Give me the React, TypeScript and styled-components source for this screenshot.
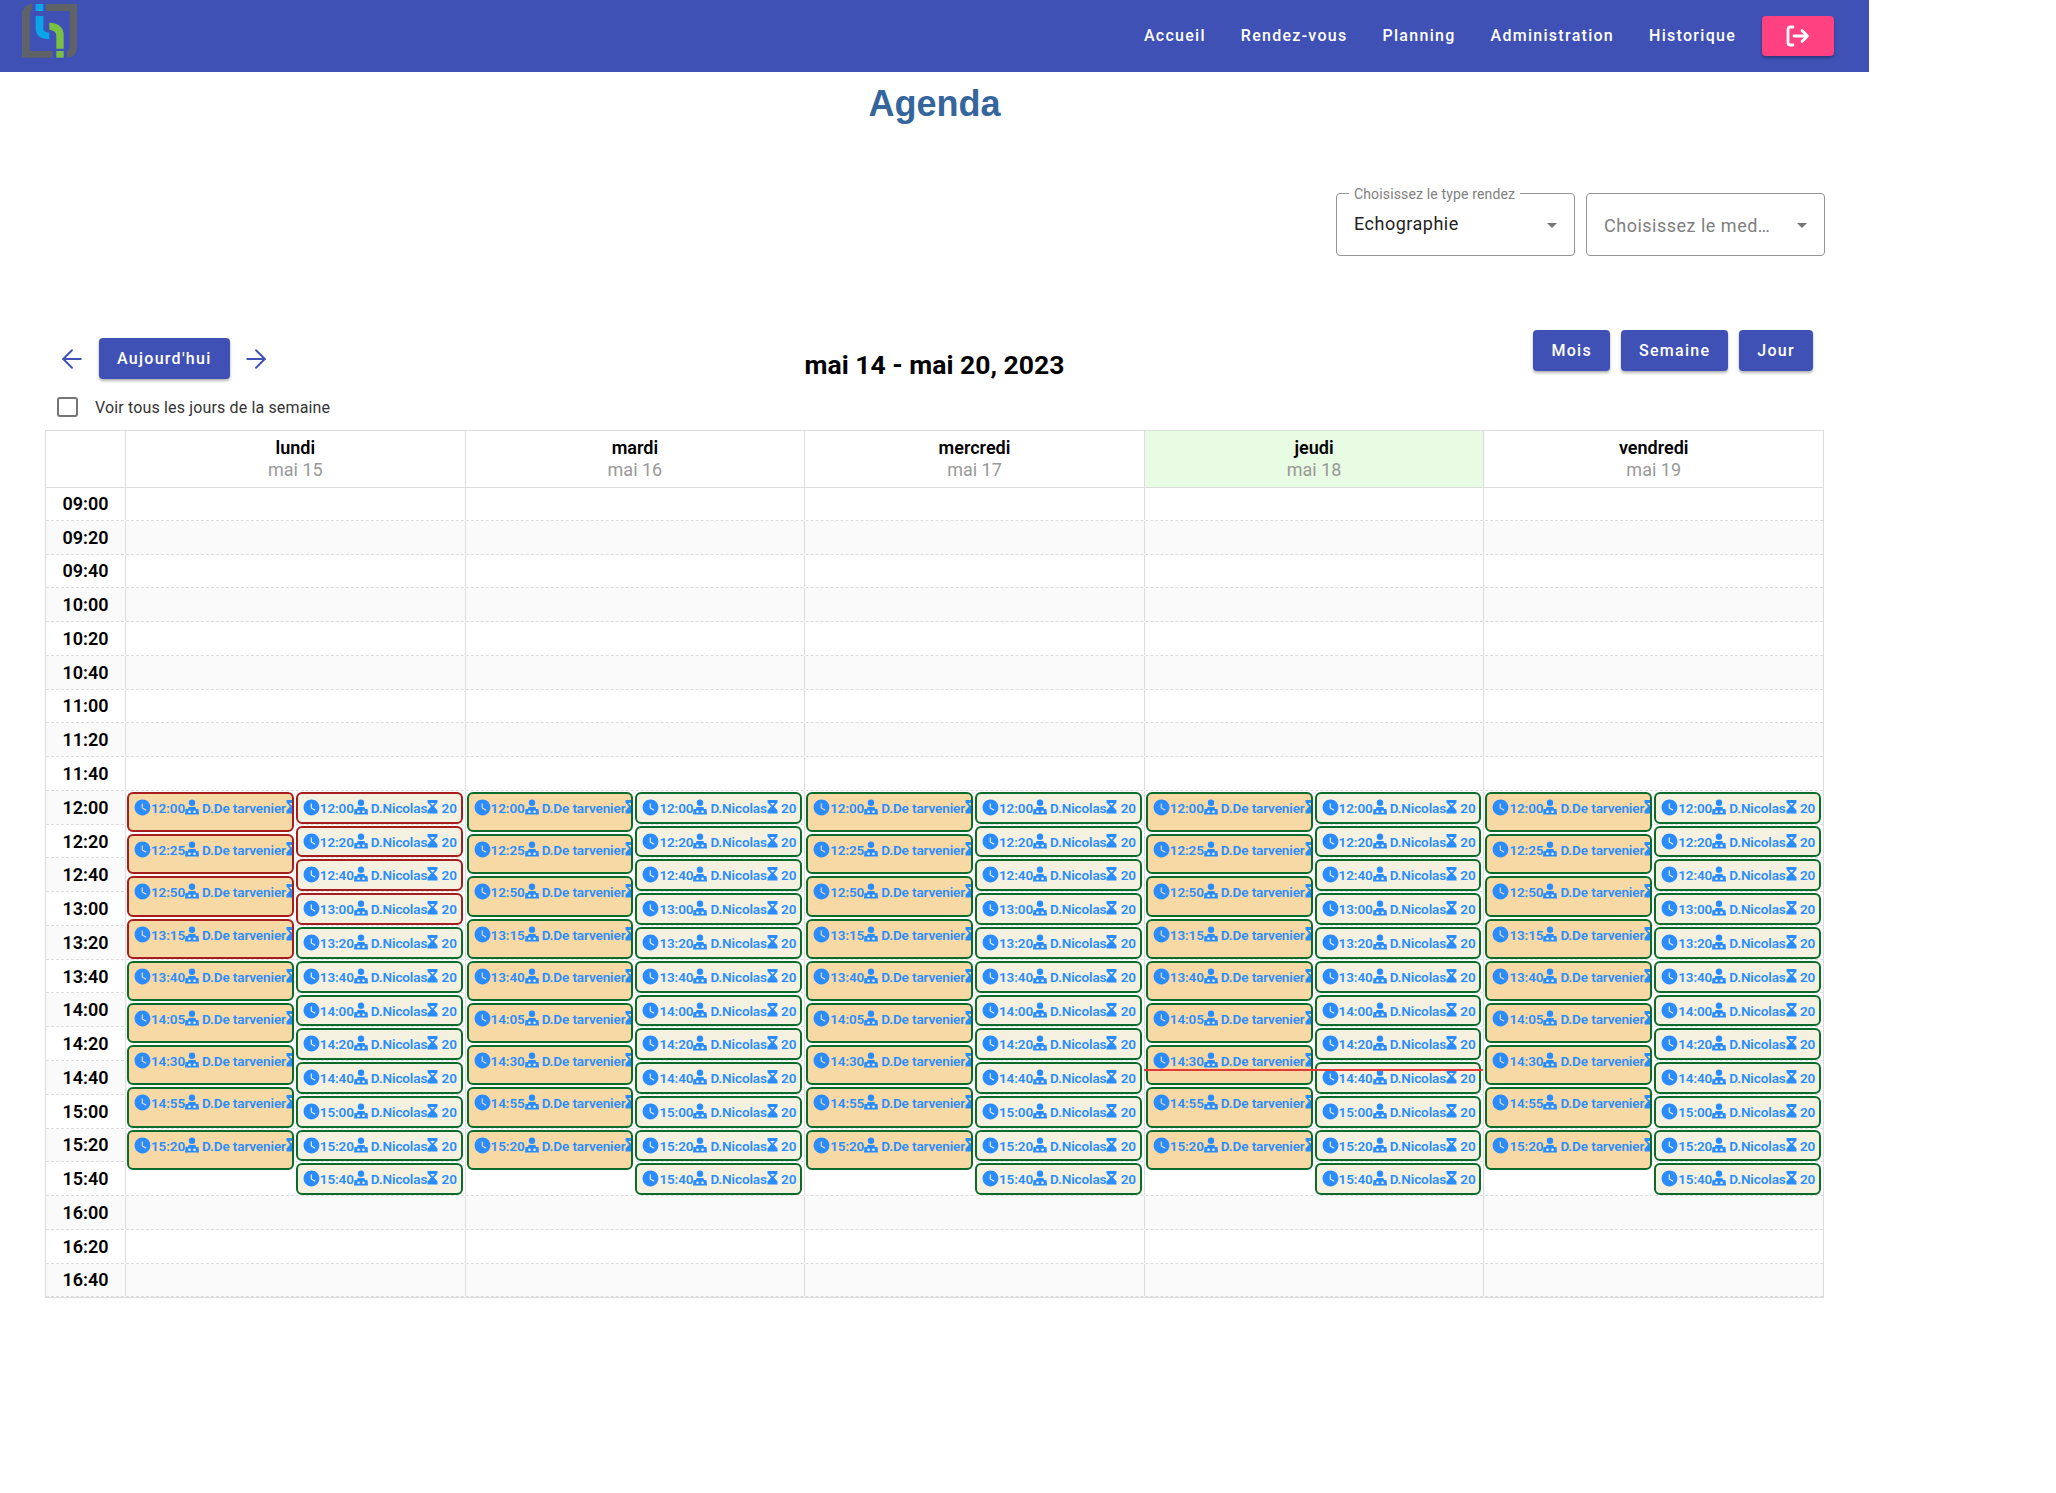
import { ArrowLeft, ArrowRight } from 'lucide-react';
import { MdWatchLater } from 'react-icons/md';
import styled, { createGlobalStyle } from 'styled-components';

const ROW_HEIGHT = 33.77;

const GlobalStyle = createGlobalStyle`
  html, body {
    margin: 0;
    padding: 0;
    background: #fff;
    font-family: Roboto, "Liberation Sans", sans-serif;
  }
`;

const Page = styled.div`
  width: 1869px;
  height: 1493px;
`;

const NavBar = styled.header`
  height: 72px;
  display: flex;
  align-items: center;
  justify-content: space-between;
  padding: 0 35px 0 22px;
  box-sizing: border-box;
  background: #3f51b5;
`;

const Logo = styled.svg`
  width: 55px;
  height: 54px;
  margin-top: -10px;
  display: block;
`;

const NavLinks = styled.nav`
  display: flex;
  align-items: center;
`;

const NavLink = styled.a`
  margin-right: 35px;
  margin-top: -2px;
  color: #fff;
  font-size: 16px;
  font-weight: 500;
  letter-spacing: 1.28px;
  white-space: nowrap;
`;

const LogoutButton = styled.button`
  width: 72px;
  height: 40px;
  margin-left: -9px;
  padding: 0;
  border: 0;
  border-radius: 4px;
  display: flex;
  align-items: center;
  justify-content: center;
  background: #ff4081;
  box-shadow: 0 2px 3px rgba(0, 0, 0, 0.3);
`;

const Title = styled.h1`
  margin: 0;
  padding-top: 10px;
  height: 121px;
  box-sizing: border-box;
  text-align: center;
  color: #34659c;
  font-family: "Liberation Sans", Arial, sans-serif;
  font-size: 36px;
  line-height: 44px;
  font-weight: 700;
`;

const Filters = styled.div`
  height: 137px;
  display: flex;
  justify-content: flex-end;
  gap: 11px;
  padding-right: 44px;
`;

const SelectBox = styled.div`
  position: relative;
  width: 239px;
  height: 63px;
  box-sizing: border-box;
  padding: 0 40px 0 17px;
  display: flex;
  align-items: center;
  border: 1px solid #949494;
  border-radius: 4px;
`;

const SelectLabel = styled.span`
  position: absolute;
  top: -7px;
  left: 12px;
  padding: 0 5px;
  background: #fff;
  color: #808080;
  font-size: 14px;
  line-height: 15px;
  letter-spacing: 0.15px;
  white-space: nowrap;
`;

const SelectValue = styled.span<{ $placeholder?: boolean }>`
  margin-top: ${(p) => (p.$placeholder ? '2px' : '-3px')};
  color: ${(p) => (p.$placeholder ? '#808080' : '#222')};
  font-size: 18px;
  letter-spacing: 0.5px;
  white-space: nowrap;
`;

const SelectArrow = styled.span`
  position: absolute;
  right: 17px;
  top: 29px;
  border-left: 5.5px solid transparent;
  border-right: 5.5px solid transparent;
  border-top: 5.5px solid #757575;
`;

const Toolbar = styled.div`
  display: grid;
  grid-template-columns: 1fr auto 1fr;
  padding: 0 56px;
  height: 62px;
`;

const ToolbarLeft = styled.div`
  display: flex;
  align-items: center;
  height: 41px;
  margin-top: 8px;
`;

const ArrowButton = styled.span<{ $before: number; $after: number }>`
  display: flex;
  margin: 0 ${(p) => p.$after}px 0 ${(p) => p.$before}px;
  color: #3f51b5;
`;

const ActionButton = styled.button`
  height: 41px;
  padding: 0 18px;
  border: 0;
  border-radius: 4px;
  background: #3f51b5;
  color: #fff;
  font-family: inherit;
  font-size: 16px;
  font-weight: 500;
  letter-spacing: 1.28px;
  box-shadow: 0 2px 3px rgba(0, 0, 0, 0.3);
`;

const RangeTitle = styled.h2`
  margin: 17px 0 0;
  font-size: 26.5px;
  line-height: 36px;
  font-weight: 700;
  color: #000;
  white-space: nowrap;
`;

const ViewButtons = styled.div`
  display: flex;
  justify-content: flex-end;
  gap: 11px;
`;

const CheckRow = styled.label`
  display: flex;
  align-items: center;
  gap: 17px;
  height: 30px;
  margin-bottom: 8px;
  padding-left: 57px;
  color: #333;
  font-size: 16px;
  letter-spacing: 0.15px;
`;

const CheckBox = styled.span`
  width: 21px;
  height: 20px;
  box-sizing: border-box;
  border: 2px solid #757575;
  border-radius: 3px;
`;

const Calendar = styled.section`
  width: 1779px;
  margin: 0 0 0 45px;
  box-sizing: border-box;
  border: 1px solid #ddd;
`;

const HeaderRow = styled.div`
  display: grid;
  grid-template-columns: 79px repeat(5, 1fr);
  height: 56px;
  border-bottom: 1px solid #ddd;
`;

const Corner = styled.div``;

const DayHead = styled.div<{ $today?: boolean }>`
  border-left: 1px solid #ddd;
  padding-bottom: 2px;
  box-sizing: border-box;
  display: flex;
  flex-direction: column;
  align-items: center;
  justify-content: center;
  background: ${(p) => (p.$today ? '#e8fbe3' : 'transparent')};
`;

const DayName = styled.span`
  color: #000;
  font-size: 18px;
  line-height: 23px;
  font-weight: 600;
`;

const DayDate = styled.span`
  color: #999;
  font-size: 18px;
  line-height: 22px;
`;

const Body = styled.div`
  position: relative;
  margin-top: -1px;
`;

const SlotRow = styled.div<{ $odd: boolean }>`
  display: grid;
  grid-template-columns: 79px repeat(5, 1fr);
  height: ${ROW_HEIGHT}px;
  box-sizing: border-box;
  border-bottom: 1px dashed #ddd;
  background: ${(p) => (p.$odd ? '#fafafa' : '#fff')};
  &:first-child {
    border-top: 1px solid #ddd;
  }
  &:last-child {
    border-bottom: 0;
    height: ${ROW_HEIGHT + 1}px;
  }
`;

const SlotLabel = styled.div`
  display: flex;
  align-items: center;
  justify-content: center;
  color: #000;
  font-size: 18px;
  font-weight: 600;
`;

const SlotCell = styled.div`
  border-left: 1px solid #ddd;
`;

const EventLayer = styled.div`
  position: absolute;
  inset: 0 0 0 79px;
  display: grid;
  grid-template-columns: repeat(5, 1fr);
`;

const DayEvents = styled.div`
  position: relative;
  display: grid;
  grid-template-columns: 1fr 1fr;
  column-gap: 2px;
  padding: 0 2px;
  min-width: 0;
`;

const Lane = styled.div`
  position: relative;
  min-width: 0;
`;

const EventCard = styled.div<{ $busy: boolean; $long?: boolean }>`
  position: absolute;
  left: 0;
  right: 0;
  box-sizing: border-box;
  display: flex;
  align-items: flex-start;
  padding: 5px 0 0 5px;
  overflow: hidden;
  white-space: nowrap;
  border: 2px solid ${(p) => (p.$busy ? '#a51d1d' : '#0b6b2b')};
  border-radius: 6px;
  background: ${(p) => (p.$long ? '#f6d9a5' : '#f4f1e0')};
  color: #2a8cff;
  font-size: 13.5px;
  line-height: 18px;
  font-weight: 600;
  letter-spacing: -0.1px;
  svg {
    flex: none;
  }
`;

const ClockSlot = styled.span`
  display: flex;
  margin: -1px -1px 0 -1px;
`;

const EventName = styled.span`
  margin-left: 3px;
`;

const NowLine = styled.div`
  position: absolute;
  left: 0;
  right: 0;
  height: 2px;
  background: #e53935;
`;

const LogoMark = () => (
  <Logo viewBox="65 11 165 162">
    <path fill="#5f6368" d="M95 11Q65 13 65 45V172H157V152H88V50Q88 32 95 30Z" />
    <path fill="#5f6368" d="M137 11H230V140Q230 170 200 172V152Q208 150 208 140V32H137Z" />
    <rect fill="#0aa5e8" x="106" y="11" width="23" height="21" />
    <path fill="#0aa5e8" d="M106 47H129V85Q129 95 147 97V117Q106 115 106 85Z" />
    <path fill="#7ac143" d="M147 67Q190 69 190 105V145H168V105Q168 92 147 88Z" />
    <rect fill="#7ac143" x="168" y="152" width="22" height="20" />
  </Logo>
);

const LogoutIcon = () => (
  <svg width="24" height="22" viewBox="0 0 24 22" fill="none" stroke="#fff" strokeWidth="2.8" strokeLinecap="round" strokeLinejoin="round">
    <path d="M7 2H4.500Q2 2 2 4.500V17.500Q2 20 4.500 20H7" />
    <path d="M8 11H21M16 5.500L21.500 11L16 16.500" />
  </svg>
);

const DoctorIcon = () => (
  <svg width="14" height="16" viewBox="0 0 14 16">
    <circle cx="7" cy="3.800" r="3.200" fill="currentColor" />
    <path fill="currentColor" d="M3.500 8H10.500L11 10H13.500L14 15.500H0L.5 10H3Z" />
    <circle cx="4.500" cy="12.700" r="1.300" fill="#f4f1e0" />
    <circle cx="9.500" cy="12.700" r="1.300" fill="#f4f1e0" />
  </svg>
);

const HourglassIcon = () => (
  <svg width="11" height="15" viewBox="0 0 11 15" fill="currentColor">
    <path fillRule="evenodd" d="M.5 1H10.500V3.500L7 7.500L10.500 11.500V14.500H.5V11.500L4 7.500L.5 3.500ZM3.200 4H7.800L5.500 6.500Z" />
  </svg>
);

const toMinutes = (label: string) => {
  const [h, m] = label.split(':').map(Number);
  return h * 60 + m;
};

const toLabel = (minutes: number) =>
  `${String(Math.floor(minutes / 60)).padStart(2, '0')}:${String(minutes % 60).padStart(2, '0')}`;

const slotLabels = Array.from({ length: 24 }, (_, i) => toLabel(540 + i * 20));
const longTimes = Array.from({ length: 9 }, (_, i) => toLabel(720 + i * 25));
const shortTimes = Array.from({ length: 12 }, (_, i) => toLabel(720 + i * 20));

const days = [
  { name: 'lundi', date: 'mai 15', busyUntil: 800 },
  { name: 'mardi', date: 'mai 16', busyUntil: 0 },
  { name: 'mercredi', date: 'mai 17', busyUntil: 0 },
  { name: 'jeudi', date: 'mai 18', busyUntil: 0, today: true },
  { name: 'vendredi', date: 'mai 19', busyUntil: 0 },
];

const eventBox = (time: string, minutes: number) => ({
  top: ((toMinutes(time) - 540) / 20) * ROW_HEIGHT + 1,
  height: (minutes / 20) * ROW_HEIGHT - 2,
});

const Event = ({ time, doctor, minutes, busy }: { time: string; doctor: string; minutes: number; busy: boolean }) => (
  <EventCard $busy={busy} $long={minutes === 25} style={eventBox(time, minutes)}>
    <ClockSlot>
      <MdWatchLater size={19} />
    </ClockSlot>
    <span>{time}</span>
    <DoctorIcon />
    <EventName>{doctor}</EventName>
    <HourglassIcon />
    <span>&nbsp;20</span>
  </EventCard>
);

const App = () => (
  <Page>
    <GlobalStyle />
    <NavBar>
      <LogoMark />
      <NavLinks>
        <NavLink>Accueil</NavLink>
        <NavLink>Rendez-vous</NavLink>
        <NavLink>Planning</NavLink>
        <NavLink>Administration</NavLink>
        <NavLink>Historique</NavLink>
        <LogoutButton>
          <LogoutIcon />
        </LogoutButton>
      </NavLinks>
    </NavBar>

    <Title>Agenda</Title>

    <Filters>
      <SelectBox>
        <SelectLabel>Choisissez le type rendez</SelectLabel>
        <SelectValue>Echographie</SelectValue>
        <SelectArrow />
      </SelectBox>
      <SelectBox>
        <SelectValue $placeholder>Choisissez le med…</SelectValue>
        <SelectArrow />
      </SelectBox>
    </Filters>

    <Toolbar>
      <ToolbarLeft>
        <ArrowButton $before={1} $after={12}>
          <ArrowLeft size={30} strokeWidth={1.5} />
        </ArrowButton>
        <ActionButton>Aujourd'hui</ActionButton>
        <ArrowButton $before={11} $after={0}>
          <ArrowRight size={30} strokeWidth={1.5} />
        </ArrowButton>
      </ToolbarLeft>
      <RangeTitle>mai 14 - mai 20, 2023</RangeTitle>
      <ViewButtons>
        <ActionButton>Mois</ActionButton>
        <ActionButton>Semaine</ActionButton>
        <ActionButton>Jour</ActionButton>
      </ViewButtons>
    </Toolbar>

    <CheckRow>
      <CheckBox />
      Voir tous les jours de la semaine
    </CheckRow>

    <Calendar>
      <HeaderRow>
        <Corner />
        {days.map((day) => (
          <DayHead key={day.name} $today={day.today}>
            <DayName>{day.name}</DayName>
            <DayDate>{day.date}</DayDate>
          </DayHead>
        ))}
      </HeaderRow>
      <Body>
        {slotLabels.map((label, i) => (
          <SlotRow key={label} $odd={i % 2 === 1}>
            <SlotLabel>{label}</SlotLabel>
            {days.map((day) => (
              <SlotCell key={day.name} />
            ))}
          </SlotRow>
        ))}
        <EventLayer>
          {days.map((day) => (
            <DayEvents key={day.name}>
              <Lane>
                {longTimes.map((time) => (
                  <Event key={time} time={time} doctor="D.De tarvenier" minutes={25} busy={toMinutes(time) < day.busyUntil} />
                ))}
              </Lane>
              <Lane>
                {shortTimes.map((time) => (
                  <Event key={time} time={time} doctor="D.Nicolas" minutes={20} busy={toMinutes(time) < day.busyUntil} />
                ))}
              </Lane>
              {day.today && <NowLine style={{ top: ((885 - 540) / 20) * ROW_HEIGHT - 1 }} />}
            </DayEvents>
          ))}
        </EventLayer>
      </Body>
    </Calendar>
  </Page>
);

export default App;
